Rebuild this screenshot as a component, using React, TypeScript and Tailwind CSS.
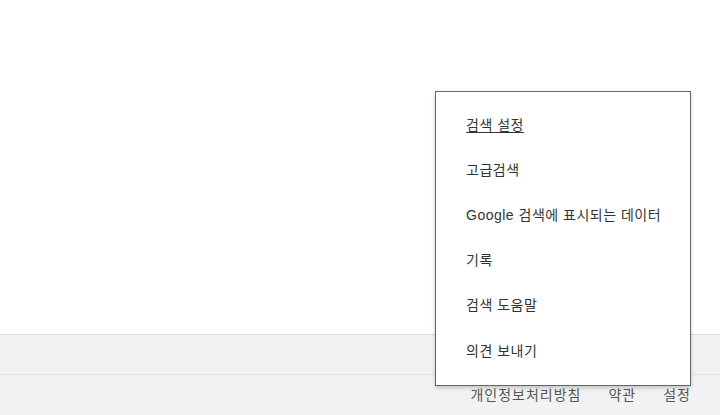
const menuItems = ['검색 설정', '고급검색', 'Google 검색에 표시되는 데이터', '기록', '검색 도움말', '의견 보내기'];

const footerLinks = ['개인정보처리방침', '약관', '설정'];

export default function App() {
    return (
        <div className="relative flex h-[415px] w-[720px] flex-col overflow-hidden bg-white font-['Liberation_Sans','Noto_Sans_CJK_KR',sans-serif] text-sm">
            <div className="flex-1" />
            <footer className="border-t border-[#dadada] bg-[#f2f2f2]">
                <div className="h-[40px] border-b border-[#e4e4e4]" />
                <div className="flex h-[40px] items-center justify-end gap-[27px] pr-[29px] tracking-[1px] text-[#555]">
                    {footerLinks.map((link) => (
                        <a key={link} href="#" className="leading-none">
                            {link}
                        </a>
                    ))}
                </div>
            </footer>

            <div className="absolute top-[91px] left-[435px] w-[256px] border border-[#666] bg-white pt-[10px] pb-[12px] tracking-[0.5px] shadow-[0_2px_4px_rgba(0,0,0,0.2)]">
                {menuItems.map((item, i) => (
                    <div key={item} className="flex h-[45.2px] items-center pl-[30px] text-[#333]">
                        <span className={i === 0 ? 'underline underline-offset-2' : ''}>{item}</span>
                    </div>
                ))}
            </div>
        </div>
    );
}
